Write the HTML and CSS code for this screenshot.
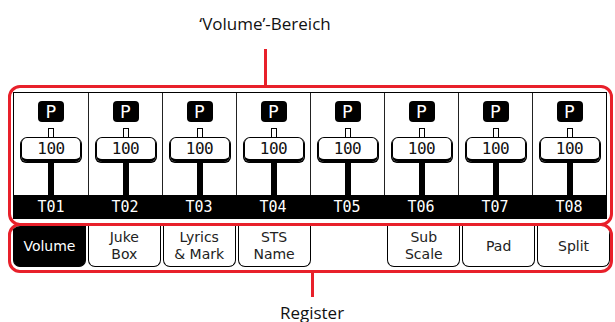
FILE: index.html
```html
<!DOCTYPE html>
<html lang="de">
<head>
    <meta charset="UTF-8">
    <meta name="viewport" content="width=device-width, initial-scale=1.0">
    <title>Volume-Bereich</title>
    <link rel="stylesheet" href="styles.css">
</head>
<body>
    <div class="callout callout-top">
        <div class="callout-text">‘Volume’-Bereich</div>
        <div class="callout-line"></div>
    </div>

    <div class="frame frame-volume">
        <div class="screen">
            <div class="tracks">
                <div class="track"><div class="preset">P</div><div class="link"></div><div class="value">100</div><div class="stem"></div></div>
                <div class="track"><div class="preset">P</div><div class="link"></div><div class="value">100</div><div class="stem"></div></div>
                <div class="track"><div class="preset">P</div><div class="link"></div><div class="value">100</div><div class="stem"></div></div>
                <div class="track"><div class="preset">P</div><div class="link"></div><div class="value">100</div><div class="stem"></div></div>
                <div class="track"><div class="preset">P</div><div class="link"></div><div class="value">100</div><div class="stem"></div></div>
                <div class="track"><div class="preset">P</div><div class="link"></div><div class="value">100</div><div class="stem"></div></div>
                <div class="track"><div class="preset">P</div><div class="link"></div><div class="value">100</div><div class="stem"></div></div>
                <div class="track"><div class="preset">P</div><div class="link"></div><div class="value">100</div><div class="stem"></div></div>
            </div>
            <div class="names">
                <span>T01</span><span>T02</span><span>T03</span><span>T04</span>
                <span>T05</span><span>T06</span><span>T07</span><span>T08</span>
            </div>
        </div>
    </div>

    <div class="frame frame-tabs">
        <div class="tabs">
            <div class="tab active">Volume</div>
            <div class="tab">Juke<br>Box</div>
            <div class="tab">Lyrics<br>&amp; Mark</div>
            <div class="tab">STS<br>Name</div>
            <div class="tab empty"></div>
            <div class="tab">Sub<br>Scale</div>
            <div class="tab">Pad</div>
            <div class="tab">Split</div>
        </div>
    </div>

    <div class="callout callout-bottom">
        <div class="callout-line"></div>
        <div class="callout-text">Register</div>
    </div>
</body>
</html>
```

FILE: styles.css
```css
body {
    margin: 0;
    width: 615px;
    height: 322px;
    overflow: hidden;
    background: #fff;
    font-family: 'Open Sans', 'Noto Sans', sans-serif;
    color: #111;
}
.callout {
    display: flex;
    flex-direction: column;
    align-items: center;
    width: 200px;
}
.callout-top {
    margin-left: 165px;
    padding-top: 12px;
}
.callout-bottom {
    margin-left: 212px;
}
.callout-text {
    font-size: 17px;
    line-height: 24px;
}
.callout-line {
    width: 3px;
    background: #e8202a;
}
.callout-top .callout-line {
    height: 36px;
    margin-top: 13px;
}
.callout-bottom .callout-line {
    height: 24px;
    margin-bottom: 4px;
}
.frame {
    margin-left: 8px;
    border: 3px solid #e8202a;
    border-radius: 12px;
    overflow: hidden;
}
.frame-volume {
    height: 131px;
    padding: 4px 3px 0 2px;
    width: 594px;
}
.frame-tabs {
    margin-top: -3px;
    height: 44px;
    padding: 0 0 0 2px;
    width: 597px;
}
.screen {
    border: 1px solid #000;
    border-bottom: none;
    height: 126px;
    display: flex;
    flex-direction: column;
}
.tracks {
    display: grid;
    grid-template-columns: repeat(8, 1fr);
    height: 105px;
}
.track {
    display: flex;
    flex-direction: column;
    align-items: center;
}
.track + .track {
    border-left: 1px solid #222;
}
.preset {
    margin-top: 8px;
    width: 26px;
    height: 21px;
    border-radius: 4px;
    background: #000;
    color: #fff;
    font-family: 'DejaVu Sans Mono', monospace;
    font-size: 18px;
    line-height: 21px;
    text-align: center;
}
.link {
    margin-top: 6px;
    width: 4px;
    height: 8px;
    border: 1px solid #000;
    border-bottom: none;
}
.value {
    width: 58px;
    height: 21px;
    border: 1px solid #000;
    border-bottom-width: 3px;
    border-radius: 6px;
    box-shadow: -1px 1px 0 #000, 1px 1px 0 #000;
    font-family: 'DejaVu Sans Mono', monospace;
    font-size: 16px;
    line-height: 21px;
    text-align: center;
    letter-spacing: -0.5px;
}
.stem {
    width: 6px;
    flex: 1;
    background: #000;
}
.names {
    display: grid;
    grid-template-columns: repeat(8, 1fr);
    background: #000;
    color: #fff;
    flex: 1;
    font-family: 'DejaVu Sans Mono', monospace;
    font-size: 15px;
    line-height: 24px;
    text-align: center;
}
.tabs {
    display: grid;
    grid-template-columns: repeat(8, 1fr);
    column-gap: 2px;
    height: 41px;
}
.tab {
    border: 1px solid #000;
    border-top: none;
    border-radius: 0 0 7px 7px;
    display: flex;
    align-items: center;
    justify-content: center;
    text-align: center;
    font-family: 'DejaVu Sans', sans-serif;
    font-size: 14px;
    line-height: 17px;
    color: #222;
}
.tab.active {
    background: #000;
    color: #fff;
}
.tab.empty {
    border-color: transparent;
}
```
